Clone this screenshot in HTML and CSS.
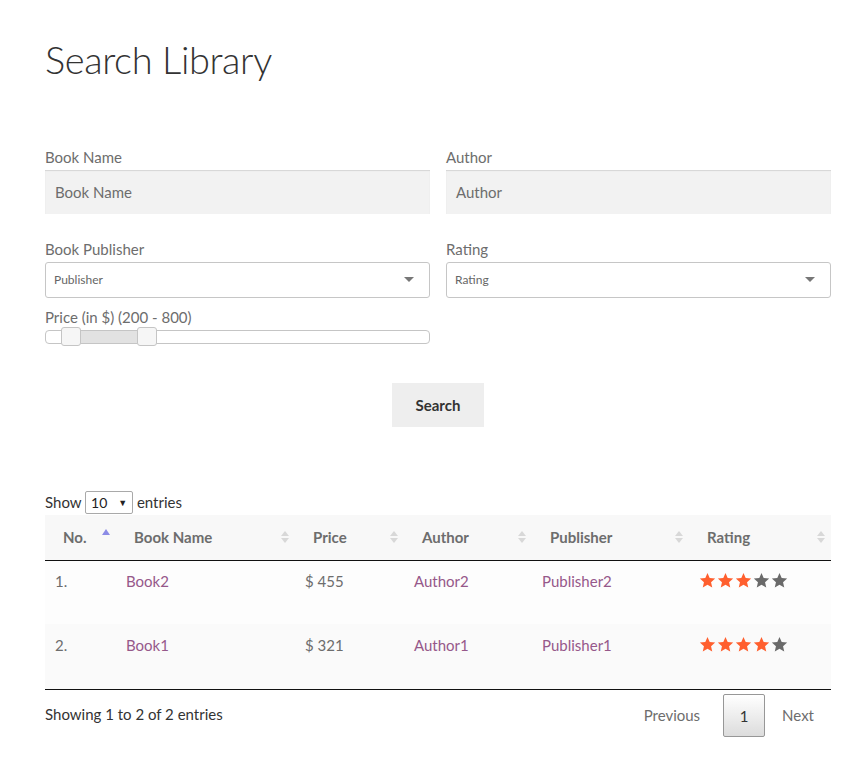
FILE: index.html
```html
<!DOCTYPE html>
<html>
<head>
<meta charset="utf-8">
<link rel="stylesheet" href="styles.css">
</head>
<body>
<div class="page">
  <h1 class="title">Search Library</h1>

  <form class="search-form">
    <div class="grid">
      <div class="field">
        <label>Book Name</label>
        <div class="text-input">Book Name</div>
      </div>
      <div class="field">
        <label>Author</label>
        <div class="text-input">Author</div>
      </div>
      <div class="field field-select">
        <label>Book Publisher</label>
        <div class="select">Publisher<span class="caret"></span></div>
      </div>
      <div class="field field-select">
        <label>Rating</label>
        <div class="select">Rating<span class="caret"></span></div>
      </div>
      <div class="field field-range">
        <label>Price (in $) (200 - 800)</label>
        <div class="slider">
          <div class="slider-fill"></div>
          <span class="handle h1"></span>
          <span class="handle h2"></span>
        </div>
      </div>
    </div>
    <div class="actions">
      <button type="button" class="btn">Search</button>
    </div>
  </form>

  <div class="length">Show <span class="len-select">10<span class="len-caret">▼</span></span> entries</div>

  <table class="books">
    <thead>
      <tr>
        <th class="c1"><span>No.</span><i class="sort asc"></i></th>
        <th class="c2"><span>Book Name</span><i class="sort"></i></th>
        <th class="c3"><span>Price</span><i class="sort"></i></th>
        <th class="c4"><span>Author</span><i class="sort"></i></th>
        <th class="c5"><span>Publisher</span><i class="sort"></i></th>
        <th class="c6"><span>Rating</span><i class="sort"></i></th>
      </tr>
    </thead>
    <tbody>
      <tr class="odd">
        <td>1.</td>
        <td><a>Book2</a></td>
        <td>$ 455</td>
        <td><a>Author2</a></td>
        <td><a>Publisher2</a></td>
        <td>
          <span class="stars">
            <svg class="star on" viewBox="0 0 24 24"><path d="M12 1.5l3.1 7.1 7.7.7-5.8 5.1 1.7 7.6L12 18l-6.7 4 1.7-7.6-5.8-5.1 7.7-.7z"/></svg>
            <svg class="star on" viewBox="0 0 24 24"><path d="M12 1.5l3.1 7.1 7.7.7-5.8 5.1 1.7 7.6L12 18l-6.7 4 1.7-7.6-5.8-5.1 7.7-.7z"/></svg>
            <svg class="star on" viewBox="0 0 24 24"><path d="M12 1.5l3.1 7.1 7.7.7-5.8 5.1 1.7 7.6L12 18l-6.7 4 1.7-7.6-5.8-5.1 7.7-.7z"/></svg>
            <svg class="star" viewBox="0 0 24 24"><path d="M12 1.5l3.1 7.1 7.7.7-5.8 5.1 1.7 7.6L12 18l-6.7 4 1.7-7.6-5.8-5.1 7.7-.7z"/></svg>
            <svg class="star" viewBox="0 0 24 24"><path d="M12 1.5l3.1 7.1 7.7.7-5.8 5.1 1.7 7.6L12 18l-6.7 4 1.7-7.6-5.8-5.1 7.7-.7z"/></svg>
          </span>
        </td>
      </tr>
      <tr class="even">
        <td>2.</td>
        <td><a>Book1</a></td>
        <td>$ 321</td>
        <td><a>Author1</a></td>
        <td><a>Publisher1</a></td>
        <td>
          <span class="stars">
            <svg class="star on" viewBox="0 0 24 24"><path d="M12 1.5l3.1 7.1 7.7.7-5.8 5.1 1.7 7.6L12 18l-6.7 4 1.7-7.6-5.8-5.1 7.7-.7z"/></svg>
            <svg class="star on" viewBox="0 0 24 24"><path d="M12 1.5l3.1 7.1 7.7.7-5.8 5.1 1.7 7.6L12 18l-6.7 4 1.7-7.6-5.8-5.1 7.7-.7z"/></svg>
            <svg class="star on" viewBox="0 0 24 24"><path d="M12 1.5l3.1 7.1 7.7.7-5.8 5.1 1.7 7.6L12 18l-6.7 4 1.7-7.6-5.8-5.1 7.7-.7z"/></svg>
            <svg class="star on" viewBox="0 0 24 24"><path d="M12 1.5l3.1 7.1 7.7.7-5.8 5.1 1.7 7.6L12 18l-6.7 4 1.7-7.6-5.8-5.1 7.7-.7z"/></svg>
            <svg class="star" viewBox="0 0 24 24"><path d="M12 1.5l3.1 7.1 7.7.7-5.8 5.1 1.7 7.6L12 18l-6.7 4 1.7-7.6-5.8-5.1 7.7-.7z"/></svg>
          </span>
        </td>
      </tr>
    </tbody>
  </table>

  <div class="table-foot">
    <div class="info">Showing 1 to 2 of 2 entries</div>
    <div class="paging">
      <span class="pg">Previous</span>
      <span class="pg current">1</span>
      <span class="pg">Next</span>
    </div>
  </div>
</div>
</body>
</html>
```

FILE: styles.css
```css
html, body {
  margin: 0;
  padding: 0;
  background: #ffffff;
}
body {
  font-family: "Lato", "Source Sans Pro", "Open Sans", sans-serif;
  color: #6d6d6d;
  font-size: 15px;
}
.page {
  width: 786px;
  margin: 0 0 0 45px;
  padding-top: 34px;
}
.title {
  margin: 0;
  font-weight: 300;
  font-size: 38px;
  line-height: 50px;
  color: #333333;
  letter-spacing: -0.4px;
}
.search-form {
  margin-top: 62px;
}
.grid {
  display: grid;
  grid-template-columns: 385px 385px;
  column-gap: 16px;
}
.field label {
  display: block;
  font-size: 15px;
  line-height: 22px;
  margin-bottom: 2px;
}
.text-input {
  height: 44px;
  box-sizing: border-box;
  background: #f2f2f2;
  box-shadow: inset 0 1px 1px rgba(0,0,0,0.12);
  padding: 0 10px;
  line-height: 44px;
  font-size: 15px;
  color: #6d6d6d;
  margin-bottom: 24px;
}
.field-select label {
  margin-bottom: 2px;
}
.select {
  position: relative;
  height: 36px;
  box-sizing: border-box;
  border: 1px solid #c6c6c6;
  border-radius: 3px;
  background: #fff;
  padding: 0 8px;
  line-height: 34px;
  font-size: 12px;
  color: #666;
}
.caret {
  position: absolute;
  right: 15px;
  top: 14px;
  width: 0;
  height: 0;
  border-left: 5px solid transparent;
  border-right: 5px solid transparent;
  border-top: 5px solid #777;
}
.field-range {
  margin-top: 8px;
}
.field-range label {
  margin-bottom: 2px;
}
.slider {
  position: relative;
  height: 14px;
  box-sizing: border-box;
  border: 1px solid #c5c5c5;
  border-radius: 4px;
  background: #fff;
}
.slider-fill {
  position: absolute;
  left: 24px;
  width: 78px;
  top: 0;
  bottom: 0;
  background: #e2e2e2;
}
.handle {
  position: absolute;
  top: -4px;
  width: 20px;
  height: 19px;
  box-sizing: border-box;
  border: 1px solid #c5c5c5;
  border-radius: 3px;
  background: #f6f6f6;
}
.h1 { left: 15px; }
.h2 { left: 91px; }
.actions {
  display: flex;
  justify-content: center;
  margin-top: 39px;
}
.btn {
  width: 92px;
  height: 44px;
  border: 0;
  background: #eeeeee;
  color: #333333;
  font-family: inherit;
  font-weight: 700;
  font-size: 15px;
}
.length {
  margin-top: 63px;
  height: 25px;
  line-height: 24px;
  color: #333;
  font-size: 15px;
}
.len-select {
  display: inline-block;
  position: relative;
  width: 48px;
  height: 23px;
  box-sizing: border-box;
  border: 1px solid #a9a9a9;
  border-radius: 2px;
  vertical-align: middle;
  line-height: 21px;
  padding-left: 5px;
  font-size: 14px;
  color: #222;
  margin-top: -3px;
}
.len-caret {
  position: absolute;
  right: 5px;
  top: 0;
  font-size: 9px;
}
.books {
  width: 786px;
  border-collapse: collapse;
  table-layout: fixed;
}
.books th {
  position: relative;
  text-align: left;
  background: #f8f8f8;
  height: 45px;
  padding: 0 18px;
  font-weight: 700;
  font-size: 15px;
  color: #6d6d6d;
  border-bottom: 1px solid #111;
}
.c1 { width: 71px; }
.c2 { width: 179px; }
.c3 { width: 109px; }
.c4 { width: 128px; }
.c5 { width: 157px; }
.c6 { width: 142px; }
.books th, .books td { box-sizing: border-box; }
.sort {
  position: absolute;
  right: 6px;
  top: 16px;
  width: 8px;
  height: 14px;
}
.sort::before, .sort::after {
  content: "";
  position: absolute;
  left: 0;
  width: 0;
  height: 0;
  border-left: 4px solid transparent;
  border-right: 4px solid transparent;
}
.sort::before {
  top: 0;
  border-bottom: 5px solid #d8d8d8;
}
.sort::after {
  top: 7px;
  border-top: 5px solid #d8d8d8;
}
.sort.asc::before {
  top: -2px;
  left: 0;
  border-bottom: 6px solid #8c8ce6;
}
.sort.asc::after {
  display: none;
}
.books td {
  padding: 10px 10px 0;
  height: 64px;
  vertical-align: top;
  font-size: 15px;
  color: #6d6d6d;
  line-height: 20px;
}
.books tr.even td { padding-top: 11px; }
.books tbody tr:last-child td { height: 65px; }
.books tr.odd td { background: #fdfdfd; }
.books tr.even td { background: #fafafa; }
.books tbody tr:last-child td { border-bottom: 1px solid #111; }
.books a { color: #96588a; }
.stars {
  display: flex;
  gap: 1px;
  padding-top: 1px;
}
.star {
  width: 17px;
  height: 17px;
  fill: #6a6a6a;
}
.star.on { fill: #ff5f2e; }
.table-foot {
  display: flex;
  justify-content: space-between;
  align-items: flex-start;
  margin-top: 4px;
}
.info {
  color: #333;
  padding-top: 11px;
  font-size: 15px;
}
.paging {
  display: flex;
  align-items: center;
}
.pg {
  display: inline-block;
  padding: 0 17px;
  height: 43px;
  line-height: 42px;
  color: #6d6d6d;
  font-size: 15px;
}
.pg.current {
  box-sizing: border-box;
  width: 42px;
  padding: 0;
  text-align: center;
  border: 1px solid #979797;
  border-radius: 2px;
  color: #333;
  background: linear-gradient(to bottom, #ffffff 0%, #dcdcdc 100%);
  margin: 0 0 0 6px;
}
```
